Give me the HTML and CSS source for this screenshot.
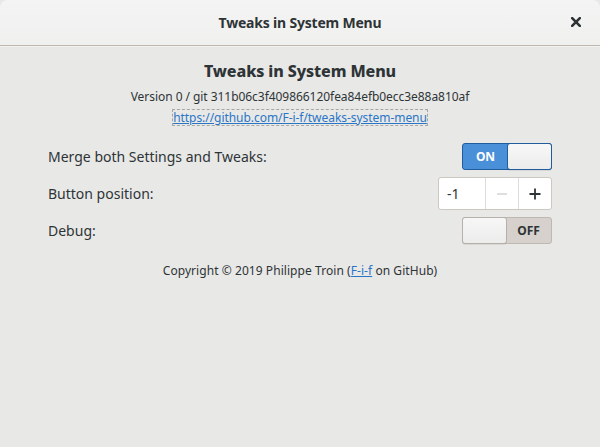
FILE: index.html
```html
<!DOCTYPE html>
<html>
<head>
<meta charset="utf-8">
<link rel="stylesheet" href="styles.css">
</head>
<body>
<div class="window">
  <header class="titlebar">
    <span class="wtitle">Tweaks in System Menu</span>
    <span class="close">
      <svg width="10" height="10" viewBox="0 0 10 10"><path d="M1.2 1.2 L8.8 8.8 M8.8 1.2 L1.2 8.8" stroke="#2e3436" stroke-width="2.6" stroke-linecap="square"/></svg>
    </span>
  </header>
  <main class="content">
    <div class="about">
      <h1 class="apptitle">Tweaks in System Menu</h1>
      <div class="version">Version 0 / git 311b06c3f409866120fea84efb0ecc3e88a810af</div>
      <a class="link focus" href="#">https://github.com/F-i-f/tweaks-system-menu</a>
    </div>
    <div class="rows">
      <div class="row">
        <span class="label">Merge both Settings and Tweaks:</span>
        <div class="switch on"><span class="state">ON</span><span class="knob"></span></div>
      </div>
      <div class="row">
        <span class="label">Button position:</span>
        <div class="spin">
          <span class="entry">-1</span>
          <span class="sbtn disabled"><svg width="12" height="12" viewBox="0 0 12 12"><path d="M1 6 H11" stroke="currentColor" stroke-width="1.6"/></svg></span>
          <span class="sbtn"><svg width="12" height="12" viewBox="0 0 12 12"><path d="M0.5 6 H11.5 M6 0.5 V11.5" stroke="currentColor" stroke-width="1.8"/></svg></span>
        </div>
      </div>
      <div class="row">
        <span class="label">Debug:</span>
        <div class="switch off"><span class="knob"></span><span class="state">OFF</span></div>
      </div>
    </div>
    <div class="copyright">Copyright © 2019 Philippe Troin (<a class="link" href="#">F-i-f</a> on GitHub)</div>
  </main>
</div>
</body>
</html>
```
FILE: styles.css
```css
* { box-sizing: border-box; }
html, body { margin: 0; padding: 0; }
body {
  background: #e8e8e7;
  font-family: "Noto Sans", "DejaVu Sans", sans-serif;
  color: #2e3436;
  width: 600px;
  height: 447px;
  overflow: hidden;
}
.window {
  height: 447px;
  background: #e8e8e7;
  border-radius: 7px 7px 0 0;
  overflow: hidden;
}
.titlebar {
  height: 46px;
  background: linear-gradient(#f4f4f4, #f0f0ef);
  border-bottom: 1px solid #bfb8b1;
  box-shadow: 0 1px 0 #f2f2f1;
  display: flex;
  align-items: center;
  justify-content: center;
  position: relative;
  border-radius: 7px 7px 0 0;
}
.wtitle {
  font-weight: bold;
  font-size: 14px;
  letter-spacing: -0.2px;
  margin-top: -1px;
}
.close {
  position: absolute;
  right: 19px;
  top: 17px;
  width: 10px;
  height: 10px;
  display: flex;
}
.content {
  padding: 14px 48px 0 48px;
}
.about {
  display: flex;
  flex-direction: column;
  align-items: center;
}
.apptitle {
  margin: 0;
  font-size: 16px;
  font-weight: 800;
  line-height: 22px;
  letter-spacing: -0.1px;
}
.version {
  font-size: 12px;
  line-height: 16px;
  margin-top: 7px;
  letter-spacing: -0.05px;
}
.link {
  color: #2a76c6;
  text-decoration: underline;
  font-size: 12px;
}
.about .link {
  margin-top: 5px;
  line-height: 15px;
  letter-spacing: -0.05px;
  outline: 1px dashed #a6a6a4;
  outline-offset: 0;
}
.rows {
  margin-top: 18px;
  display: flex;
  flex-direction: column;
  gap: 7px;
}
.row {
  display: flex;
  align-items: center;
  justify-content: space-between;
  height: 27px;
}
.row:nth-child(2) { height: 33px; }
.label {
  font-size: 14px;
  letter-spacing: 0;
}
.switch {
  width: 90px;
  height: 27px;
  border-radius: 3px;
  display: flex;
  font-size: 12px;
  font-weight: bold;
}
.switch.on {
  background: #4a90d9;
  border: 1px solid #215d9c;
  color: #fff;
}
.switch.off {
  background: #d6d1cd;
  border: 1px solid #bfb8b1;
  color: #2e3436;
}
.state {
  flex: 1;
  display: flex;
  align-items: center;
  justify-content: center;
}
.knob {
  width: 45px;
  margin: -1px;
  background: linear-gradient(#f7f7f7, #ececeb);
  border: 1px solid #b6b0aa;
  border-radius: 3px;
  box-shadow: 0 1px 0 rgba(0,0,0,0.07);
}
.switch.on .knob { border-color: #215d9c; }
.spin {
  width: 114px;
  height: 33px;
  background: #fff;
  border: 1px solid #cdc7c2;
  border-radius: 3px;
  display: flex;
}
.entry {
  flex: 1;
  font-size: 14px;
  display: flex;
  align-items: center;
  padding-left: 8px;
}
.sbtn {
  width: 33px;
  border-left: 1px solid #e1ded9;
  display: flex;
  align-items: center;
  justify-content: center;
  color: #2e3436;
}
.sbtn.disabled { color: #d6d6d4; }
.copyright {
  margin-top: 18px;
  text-align: center;
  font-size: 12px;
  letter-spacing: 0.06px;
}
```
